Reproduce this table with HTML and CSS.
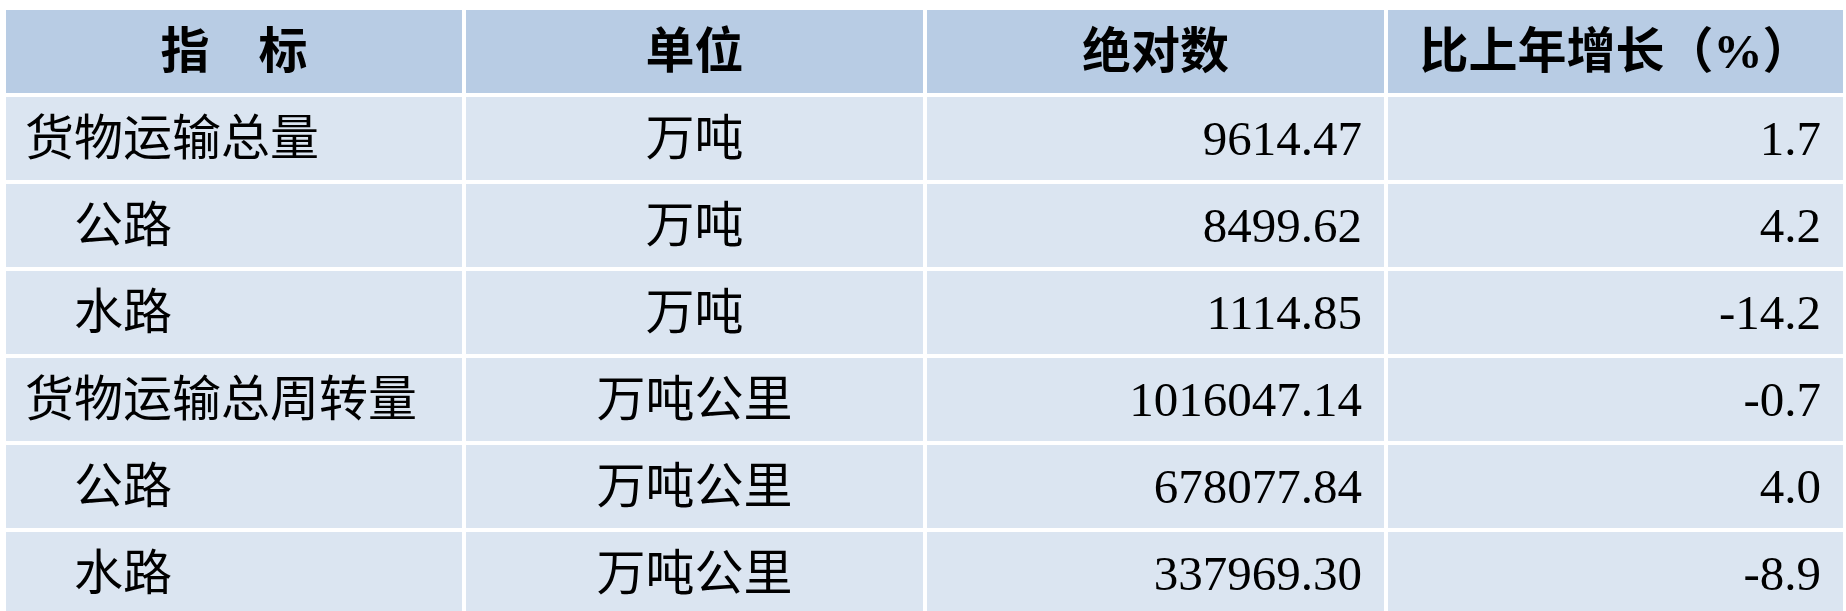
FILE: index.html
```html
<!DOCTYPE html>
<html lang="zh-CN">
<head>
<meta charset="utf-8">
<title>货物运输</title>
<link rel="stylesheet" href="styles.css">
</head>
<body>
<div class="table">
  <div class="cell head">指　标</div>
  <div class="cell head">单位</div>
  <div class="cell head">绝对数</div>
  <div class="cell head">比上年增长（%）</div>

  <div class="cell name">货物运输总量</div>
  <div class="cell unit">万吨</div>
  <div class="cell num">9614.47</div>
  <div class="cell num">1.7</div>

  <div class="cell name">　公路</div>
  <div class="cell unit">万吨</div>
  <div class="cell num">8499.62</div>
  <div class="cell num">4.2</div>

  <div class="cell name">　水路</div>
  <div class="cell unit">万吨</div>
  <div class="cell num">1114.85</div>
  <div class="cell num">-14.2</div>

  <div class="cell name">货物运输总周转量</div>
  <div class="cell unit">万吨公里</div>
  <div class="cell num">1016047.14</div>
  <div class="cell num">-0.7</div>

  <div class="cell name">　公路</div>
  <div class="cell unit">万吨公里</div>
  <div class="cell num">678077.84</div>
  <div class="cell num">4.0</div>

  <div class="cell name">　水路</div>
  <div class="cell unit">万吨公里</div>
  <div class="cell num">337969.30</div>
  <div class="cell num">-8.9</div>
</div>
</body>
</html>
```

FILE: styles.css
```css
html, body {
  margin: 0;
  padding: 0;
  background: #ffffff;
}

body {
  padding: 10px 0 0 6px;
  font-family: "Liberation Serif", "Noto Sans CJK SC", serif;
  color: #000000;
}

.table {
  display: grid;
  grid-template-columns: 456px 457px 457px 455px;
  grid-auto-rows: 83px;
  column-gap: 4px;
  row-gap: 4px;
}

.cell {
  display: flex;
  align-items: center;
  background: #dbe5f1;
  font-size: 49px;
  line-height: 1;
  white-space: pre;
  overflow: hidden;
}

.head {
  background: #b8cce4;
  justify-content: center;
  font-weight: bold;
}

.name {
  justify-content: flex-start;
  padding-left: 19px;
}

.unit {
  justify-content: center;
}

.num {
  justify-content: flex-end;
  padding-right: 22px;
}
```
